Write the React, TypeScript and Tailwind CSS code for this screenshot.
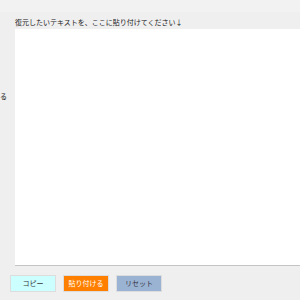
import React from 'react';

const jp = { fontFamily: '"Noto Sans CJK JP", "Liberation Sans", sans-serif' };

export default function App() {
  return (
    <div className="w-[300px] h-[300px] overflow-hidden bg-[#efefef] text-[#222]" style={jp}>
      <div className="h-[12px] bg-[#f2f2f2]" />
      <div className="flex">
        <div className="w-[15px] shrink-0 pt-[81px] text-[7px] leading-none">る</div>
        <div className="flex-1 min-w-0">
          <div className="h-[17px] pt-[7px] text-[7px] leading-none whitespace-nowrap">
            復元したいテキストを、ここに貼り付けてください↓
          </div>
          <textarea
            className="block w-[300px] h-[237px] bg-white border-0 border-b border-[#c4c4c4] resize-none outline-none"
            defaultValue=""
          />
        </div>
      </div>
      <div className="flex gap-[7px] pl-[10px] pt-[9px]">
        <button className="w-[46px] h-[17px] border border-[#dddddd] bg-[#ccffff] text-[7px] leading-none text-[#333]">
          コピー
        </button>
        <button className="w-[46px] h-[17px] border border-[#dddddd] bg-[#ff8000] text-[7px] leading-none text-white">
          貼り付ける
        </button>
        <button className="w-[46px] h-[17px] border border-[#dddddd] bg-[#9bb3d3] text-[7px] leading-none text-[#334]">
          リセット
        </button>
      </div>
    </div>
  );
}
